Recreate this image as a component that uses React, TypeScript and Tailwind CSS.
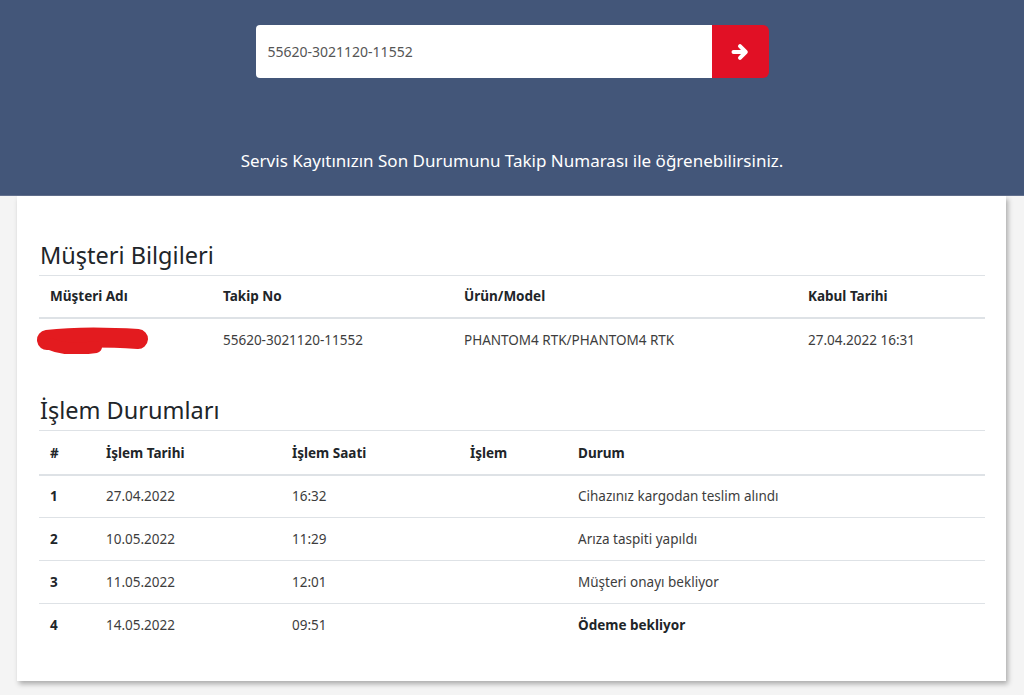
import React from "react";

const font = { fontFamily: '"Noto Sans", "Open Sans", sans-serif' };

function Redact() {
  return (
    <svg width="114" height="28" viewBox="0 0 114 28" className="block">
      <path
        d="M11 14 C 35 11, 70 11, 102 13"
        stroke="#e31b1f"
        strokeWidth="20"
        strokeLinecap="round"
        fill="none"
      />
      <path d="M14 18 C 25 23, 40 24, 60 21" stroke="#e31b1f" strokeWidth="12" strokeLinecap="round" fill="none" />
    </svg>
  );
}

function Arrow() {
  return (
    <svg width="18" height="18" viewBox="0 0 18 18" className="block">
      <path d="M2.5 9 H14.5 M9 3.2 L14.8 9 L9 14.8" stroke="white" strokeWidth="4" strokeLinecap="round" strokeLinejoin="round" fill="none" />
    </svg>
  );
}

export default function App() {
  const ops = [
    { n: "1", d: "27.04.2022", t: "16:32", s: "Cihazınız kargodan teslim alındı", b: false },
    { n: "2", d: "10.05.2022", t: "11:29", s: "Arıza taspiti yapıldı", b: false },
    { n: "3", d: "11.05.2022", t: "12:01", s: "Müşteri onayı bekliyor", b: false },
    { n: "4", d: "14.05.2022", t: "09:51", s: "Ödeme bekliyor", b: true },
  ];
  return (
    <div style={font} className="min-h-[695px] bg-[#f4f4f4] text-[13.5px] text-[#3d3d3d]">
      <div className="h-[196px] bg-[#435679] border-b border-[#62708e] pt-[25px] flex flex-col items-center">
        <div className="flex w-[513px] h-[53px]">
          <div className="flex-1 bg-white rounded-l-[4px] flex items-center pl-[12px] text-[14px] text-[#555]">
            55620-3021120-11552
          </div>
          <button className="w-[57px] bg-[#e11025] rounded-r-[6px] flex items-center justify-center text-white">
            <Arrow />
          </button>
        </div>
        <div className="mt-[71px] text-white text-[17px] leading-[24px]">
          Servis Kayıtınızın Son Durumunu Takip Numarası ile öğrenebilirsiniz.
        </div>
      </div>
      <div className="ml-[17px] w-[989px] bg-white shadow-[2px_3px_5px_rgba(0,0,0,0.3)] pl-[22px] pr-[21px] pt-[45px] pb-[35px]">
        <h3 className="text-[23.5px] leading-[28px] text-[#212529] mb-[6px] pl-[1px]">Müşteri Bilgileri</h3>
        <div className="grid grid-cols-[173px_241px_344px_188px] border-t border-[#dee2e6]">
          {["Müşteri Adı", "Takip No", "Ürün/Model", "Kabul Tarihi"].map((h) => (
            <div key={h} className="px-[11px] h-[43px] flex items-center font-bold text-[#212529] border-b-2 border-[#dee2e6]">
              {h}
            </div>
          ))}
          <div className="h-[42px] flex items-center">
            <div className="-ml-[3px]"><Redact /></div>
          </div>
          <div className="px-[11px] h-[42px] flex items-center">55620-3021120-11552</div>
          <div className="px-[11px] h-[42px] flex items-center">PHANTOM4 RTK/PHANTOM4 RTK</div>
          <div className="px-[11px] h-[42px] flex items-center">27.04.2022 16:31</div>
        </div>
        <h3 className="mt-[35px] text-[23.5px] leading-[28px] text-[#212529] mb-[6px] pl-[1px]">İşlem Durumları</h3>
        <div className="grid grid-cols-[56px_186px_178px_108px_418px] border-t border-[#dee2e6]">
          {["#", "İşlem Tarihi", "İşlem Saati", "İşlem", "Durum"].map((h) => (
            <div key={h} className="px-[11px] h-[45px] pt-[1px] flex items-center font-bold text-[#212529] border-b-2 border-[#dee2e6]">
              {h}
            </div>
          ))}
          {ops.map((o, i) => (
            <React.Fragment key={o.n}>
              <div className={`px-[11px] flex items-center font-bold text-[#212529] ${i > 0 ? "border-t border-[#dee2e6] h-[43px]" : "h-[41px]"}`}>{o.n}</div>
              <div className={`px-[11px] flex items-center ${i > 0 ? "border-t border-[#dee2e6] h-[43px]" : "h-[41px]"}`}>{o.d}</div>
              <div className={`px-[11px] flex items-center ${i > 0 ? "border-t border-[#dee2e6] h-[43px]" : "h-[41px]"}`}>{o.t}</div>
              <div className={`px-[11px] flex items-center ${i > 0 ? "border-t border-[#dee2e6] h-[43px]" : "h-[41px]"}`}></div>
              <div className={`px-[11px] flex items-center ${o.b ? "font-bold text-[#212529]" : ""} ${i > 0 ? "border-t border-[#dee2e6] h-[43px]" : "h-[41px]"}`}>{o.s}</div>
            </React.Fragment>
          ))}
        </div>
      </div>
    </div>
  );
}
